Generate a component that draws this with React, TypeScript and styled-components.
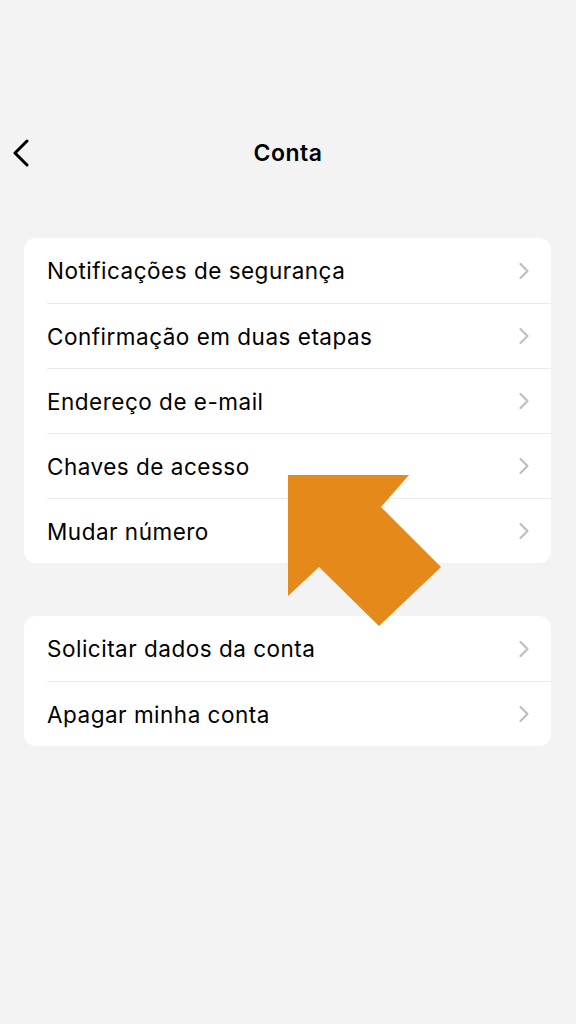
import React from "react";
import styled, { createGlobalStyle } from "styled-components";

const SECTIONS: string[][] = [
    [
        "Notificações de segurança",
        "Confirmação em duas etapas",
        "Endereço de e-mail",
        "Chaves de acesso",
        "Mudar número",
    ],
    ["Solicitar dados da conta", "Apagar minha conta"],
];

const App: React.FC = () => {
    return (
        <>
            <GlobalStyle />
            <Screen>
                <Header>
                    <BackButton aria-label="Voltar">
                        <svg width="20" height="28" viewBox="0 0 20 28">
                            <path d="M16 2 L4 14 L16 26" fill="none" stroke="#000" strokeWidth="3" strokeLinecap="round" strokeLinejoin="round" />
                        </svg>
                    </BackButton>
                    <Title>Conta</Title>
                </Header>

                <Groups>
                    {SECTIONS.map((rows, i) => (
                        <Card key={i}>
                            {rows.map((label) => (
                                <Row key={label}>
                                    <Label>{label}</Label>
                                    <svg width="12" height="18" viewBox="0 0 12 18">
                                        <path d="M2.5 2 L9.5 9 L2.5 16" fill="none" stroke="#bfbfc3" strokeWidth="2.2" strokeLinecap="round" strokeLinejoin="round" />
                                    </svg>
                                </Row>
                            ))}
                        </Card>
                    ))}
                </Groups>

                {/* highlight arrow drawn over the list */}
                <Arrow width="576" height="1024" viewBox="0 0 576 1024">
                    <polygon
                        points="288,475 409,475 381,507 441,567 379,626 319,567 288,596"
                        fill="#e5891a"
                    />
                </Arrow>
            </Screen>
        </>
    );
};

const GlobalStyle = createGlobalStyle`
    html, body {
        margin: 0;
        padding: 0;
        background: #f3f3f3;
    }
    body {
        font-family: Inter, "Liberation Sans", sans-serif;
        color: #000;
    }
`;

const Screen = styled.div`
    position: relative;
    width: 576px;
    height: 1024px;
    overflow: hidden;
    background: #f3f3f3;
`;

const Header = styled.div`
    display: flex;
    align-items: center;
    justify-content: center;
    position: relative;
    height: 66px;
    margin-top: 120px;
`;

const BackButton = styled.div`
    position: absolute;
    left: 11px;
    top: 19px;
    display: flex;
`;

const Title = styled.h1`
    margin: 0;
    font-size: 23px;
    font-weight: 600;
    letter-spacing: 0.5px;
`;

const Groups = styled.div`
    display: flex;
    flex-direction: column;
    gap: 53px;
    padding: 52px 25px 0 24px;
`;

const Card = styled.div`
    background: #fff;
    border-radius: 12px;
    overflow: hidden;
`;

const Row = styled.div`
    display: flex;
    align-items: center;
    justify-content: space-between;
    height: 65px;
    margin-left: 23px;
    padding-right: 21px;
    box-sizing: border-box;

    & + & {
        border-top: 1px solid #ebebeb;
    }
`;

const Label = styled.span`
    font-size: 22.5px;
    font-weight: 400;
    letter-spacing: 0.5px;
`;

const Arrow = styled.svg`
    position: absolute;
    left: 0;
    top: 0;
    pointer-events: none;
`;

export default App;
